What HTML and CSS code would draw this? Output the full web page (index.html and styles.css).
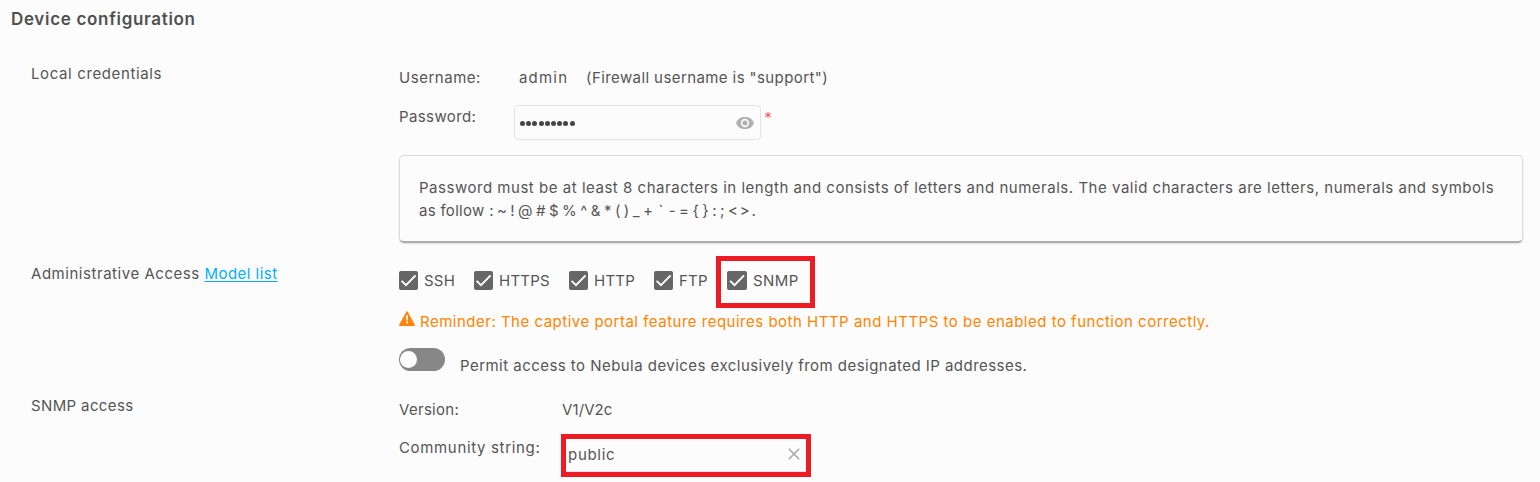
FILE: index.html
```
<!DOCTYPE html>
<html lang="en">
<head>
<meta charset="utf-8">
<title>Device configuration</title>
<link rel="stylesheet" href="styles.css">
</head>
<body>
<svg width="0" height="0" class="defs" aria-hidden="true">
  <symbol id="check" viewBox="0 0 19 19"><path d="M2.600 9.800 7 14.200 16.600 4.400" fill="none" stroke="#fff" stroke-width="1.900"/></symbol>
</svg>
<main class="page">
  <h1 class="title">Device configuration</h1>

  <section class="section credentials">
    <div class="label t-local">Local credentials</div>
    <div class="content">
      <div class="field user">
        <span class="name t-user">Username:</span>
        <span class="value t-admin">admin</span>
        <span class="hint">(Firewall username is "support")</span>
      </div>
      <div class="field pass">
        <span class="name t-pass">Password:</span>
        <div class="input password">
          <span class="dots"><i></i><i></i><i></i><i></i><i></i><i></i><i></i><i></i><i></i></span>
          <svg class="eye" width="18" height="12" viewBox="0 0 18 12"><path fill="#b0b0b0" fill-rule="evenodd" d="M9 0C5 0 1.600 1.600 0 6c1.600 4.400 5 6 9 6s7.400-1.600 9-6c-1.600-4.400-5-6-9-6Zm0 1.800a4.200 4.200 0 1 1 0 8.400 4.200 4.200 0 0 1 0-8.400Zm0 1.700a2.500 2.500 0 1 0 0 5 2.500 2.500 0 0 0 0-5Z"/></svg>
        </div>
        <svg class="required" width="6" height="6" viewBox="0 0 6 6"><path d="M3 0v6M.2 1.400l5.600 3.200M5.800 1.400.2 4.600" stroke="#ff4a55" stroke-width="1"/></svg>
      </div>
      <div class="note">
        <p class="t-note">Password must be at least 8 characters in length and consists of letters and numerals. The valid characters are letters, numerals and symbols</p>
        <p><span class="t-follow">as follow </span><span class="symbols">: ~ ! @ # $ % ^ &amp; * ( ) _ + <span class="tick">`</span> - = { } : ; </span><span class="angles">&lt; &gt; .</span></p>
      </div>
    </div>
  </section>

  <section class="section access">
    <div class="label t-access">Administrative Access <a class="link">Model list</a></div>
    <div class="content">
      <div class="checks">
        <span class="check ssh"><svg class="box"><use href="#check"/></svg>SSH</span>
        <span class="check https"><svg class="box"><use href="#check"/></svg>HTTPS</span>
        <span class="check http"><svg class="box"><use href="#check"/></svg>HTTP</span>
        <span class="check ftp"><svg class="box"><use href="#check"/></svg>FTP</span>
        <span class="check snmp"><svg class="box"><use href="#check"/></svg>SNMP</span>
      </div>
      <div class="reminder">
        <svg class="warn" width="16" height="15" viewBox="0 0 16 15"><path d="M8 .8 15.400 14.300H.6Z" fill="#ff8309" stroke="#ff8309" stroke-width="1.200" stroke-linejoin="round"/><path d="M7 4.500h2l-.3 5H7.300ZM7.100 10.600h1.800v1.800H7.100Z" fill="#fff"/></svg>
        <span>Reminder: The captive portal feature requires both HTTP and HTTPS to be enabled to function correctly.</span>
      </div>
      <div class="permit">
        <span class="toggle"><span class="knob"></span></span>
        <span class="permit-text">Permit access to Nebula devices exclusively from designated IP addresses.</span>
      </div>
    </div>
  </section>

  <section class="section snmp-access">
    <div class="label t-snmp">SNMP access</div>
    <div class="content">
      <div class="field version">
        <span class="name wide t-version">Version:</span>
        <span class="t-v">V1/V2c</span>
      </div>
      <div class="field community">
        <span class="name wide t-comm">Community string:</span>
        <div class="input string">
          <span class="t-public">public</span>
          <svg class="clear" width="12" height="12" viewBox="0 0 12 12"><path d="m.8.800 10.400 10.400M11.200.8.800 11.200" stroke="#a8a8a8" stroke-width="1.600"/></svg>
        </div>
      </div>
    </div>
  </section>
</main>
</body>
</html>
```
FILE: styles.css
```
*, *::after { box-sizing: border-box; }
html { background: #fcfcfc; }
body {
  margin: 0;
  height: 482px;
  overflow: hidden;
  background: #fcfcfc;
  color: #555;
  font: 370 15px/24px Inter, "Liberation Sans", sans-serif;
}
h1, p { margin: 0; }
svg { display: block; flex: none; }
.defs { height: 0; }
.page { padding: 7px 17px 0 11px; white-space: nowrap; }
.title { font-size: 17px; font-weight: 600; line-height: 24px; letter-spacing: .68px; color: #505050; }

.section { display: grid; grid-template-columns: 368px 1fr; padding-left: 20px; }
.credentials { padding-top: 30px; height: 212px; }
.credentials .label { padding-top: 1px; }
.access { padding-top: 19px; height: 132px; }
.snmp-access { padding-top: 19px; }

.field { display: flex; align-items: flex-start; }
.name { flex: none; width: 115px; }
.name.wide { width: 163px; }
.user { padding-top: 5px; }
.value { width: 71px; padding-left: 5px; }
.user .hint { letter-spacing: .41px; padding-left: 1px; }
.pass { height: 50px; padding-top: 15px; }
.password {
  display: flex;
  align-items: center;
  justify-content: space-between;
  width: 247px;
  height: 35px;
  padding: 0 6px 0 5px;
  border: 1px solid #e3e3e3;
  border-radius: 4px;
}
.dots { display: flex; gap: 1.200px; padding-top: 2px; }
.dots i { width: 5px; height: 5px; border-radius: 50%; background: #444; }
.required { margin: 7px 0 0 4px; }
.note {
  height: 88px;
  margin-top: 15px;
  padding: 20px 19px;
  line-height: 23px;
  border: 1px solid #dadada;
  border-bottom: 2px solid #adadad;
  border-radius: 5px;
  box-shadow: 0 1px 2px rgba(0, 0, 0, .12);
}
.symbols { letter-spacing: -.38px; }
.tick { margin: 0 2px; }
.angles { letter-spacing: -1.200px; }

.link { color: #00aeff; text-decoration: underline; text-underline-offset: 2px; letter-spacing: .46px; }
.checks { display: flex; padding-top: 7px; }
.check { position: relative; display: flex; align-items: center; gap: 6px; height: 24px; letter-spacing: .25px; }
.box { width: 19px; height: 19px; margin-top: -1px; border-radius: 2px; background: #666; }
.ssh { width: 75px; }
.https { width: 95px; }
.http { width: 85px; }
.ftp { width: 73px; }
.snmp { letter-spacing: .4px; }
.snmp .box { width: 20px; }
.snmp::after {
  content: "";
  position: absolute;
  left: -11px;
  top: -13px;
  width: 99px;
  height: 52px;
  border: 5px solid #ed1c24;
}
.reminder { display: flex; padding-top: 17px; color: #ff8400; letter-spacing: .5px; }
.warn { margin: 1px 5px 0 0; }
.permit { display: flex; padding-top: 14px; }
.toggle { width: 46px; height: 23px; padding: 3px 1px; border-radius: 12px; background: #878787; }
.knob { display: block; width: 17px; height: 17px; border-radius: 50%; background: #fff; }
.permit-text { padding: 6px 0 0 15px; letter-spacing: .46px; }

.version { padding-top: 4px; }
.community { padding-top: 14px; }
.string {
  display: flex;
  justify-content: space-between;
  align-items: center;
  width: 250px;
  height: 43px;
  margin: -2px 0 0 -1px;
  padding: 0 6px 2px 2px;
  border: 5px solid #ed1c24;
  box-shadow: inset 0 -1px #e3e0ee;
}
.clear { margin-bottom: 2px; }

.t-local { letter-spacing: .62px; }
.t-user { letter-spacing: .53px; }
.t-admin { letter-spacing: 1.200px; }
.t-pass { letter-spacing: .4px; }
.t-note { letter-spacing: .525px; }
.t-follow { letter-spacing: .3px; }
.t-access { letter-spacing: .54px; }
.t-snmp { letter-spacing: .37px; }
.t-version { letter-spacing: .3px; }
.t-v { letter-spacing: .1px; }
.t-comm { letter-spacing: .66px; }
.t-public { letter-spacing: .7px; }
```
